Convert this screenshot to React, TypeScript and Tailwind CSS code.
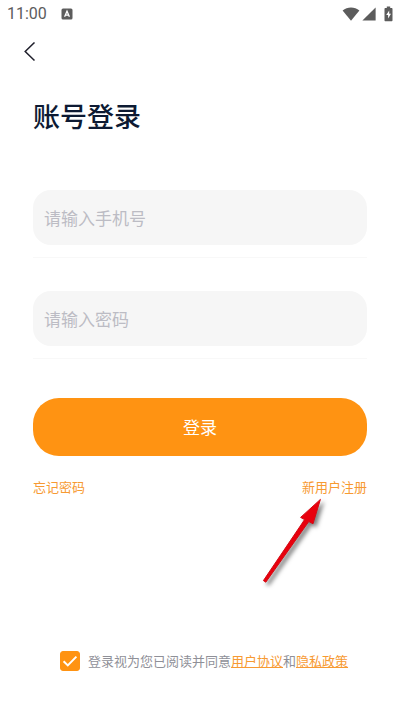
import React, { useState } from 'react';

interface FieldProps {
  type: string;
  label: string;
  value: string;
  onChange: (value: string) => void;
}

const Field: React.FC<FieldProps> = ({ type, label, value, onChange }) => (
  <div className="border-b border-[#f8f8f8] pb-3">
    <input
      type={type}
      value={value}
      aria-label={label}
      placeholder={label}
      onChange={(e) => onChange(e.target.value)}
      className="block h-[55px] w-full rounded-[18px] bg-[#f6f6f6] px-[11px] text-[17px] text-[#1b2338] outline-none placeholder:text-[#bcbcc4]"
    />
  </div>
);

const StatusBar = () => (
  <div className="flex h-7 items-center justify-between px-[7px] text-[#5c5c5c]">
    <div className="flex items-center gap-[14px]">
      <span className="font-['Roboto',sans-serif] text-base leading-5">11:00</span>
      <svg width="12" height="12" viewBox="0 0 12 12">
        <rect x="0.5" y="0.5" width="11" height="11" rx="1.5" fill="currentColor" />
        <path d="M3.6 8.8L6 3.2l2.4 5.6M4.4 7.1h3.2" fill="none" stroke="#fff" strokeWidth="1.3" />
      </svg>
    </div>
    <div className="flex items-center">
      <svg width="18" height="14" viewBox="0 0 18 14" fill="currentColor">
        <path d="M0.6 3.6C5.4-0.4 12.6-0.4 17.4 3.6L9 13.8z" />
      </svg>
      <svg className="ml-[2px]" width="14" height="14" viewBox="0 0 14 14" fill="currentColor">
        <path d="M13.6 0.4v13.2H0.4z" />
      </svg>
      <svg className="ml-2" width="9" height="16" viewBox="0 0 9 16">
        <path d="M2.8 0.5h3.4v1.4h1.3c.6 0 1 .4 1 1v11.3c0 .6-.4 1-1 1h-6c-.6 0-1-.4-1-1V2.9c0-.6.4-1 1-1h1.3z" fill="currentColor" />
        <path d="M5.2 4.4L2.2 9h1.9v3.6L7 7.8H5.2z" fill="#fff" />
      </svg>
    </div>
  </div>
);

// Red pointer that highlights the register link
const Pointer = () => (
  <svg
    className="pointer-events-none absolute right-9 top-5 overflow-visible"
    width="70"
    height="92"
    viewBox="0 0 70 92"
    style={{ filter: 'drop-shadow(3px 3px 2px rgba(0,0,0,0.5))' }}
  >
    <path d="M2.4 83.6L43.6 22.6l-4-2.2L59.4 2.4 52 26.8l-4.2-2.3L4.8 85.2z" fill="#e8000d" stroke="#d40a14" strokeWidth="1" strokeLinejoin="round" />
  </svg>
);

export default function App() {
  const [phone, setPhone] = useState('');
  const [password, setPassword] = useState('');
  const [agreed, setAgreed] = useState(true);

  return (
    <div className="flex min-h-screen flex-col bg-white font-['Noto_Sans_CJK_SC',sans-serif]">
      <StatusBar />

      <header className="flex h-12 items-center pl-5">
        <button type="button" aria-label="返回" className="flex h-6 w-5 items-center justify-center text-[#20202c]">
          <svg width="12" height="20" viewBox="0 0 12 20" fill="none" stroke="currentColor" strokeWidth="1.5">
            <path d="M10.5 0.5L1.2 9.5l9.3 9" />
          </svg>
        </button>
      </header>

      <main className="px-[33px] pt-5">
        <h1 className="text-[27px] font-medium leading-10 text-[#0d1a33]">账号登录</h1>

        <form className="mt-[54px]" onSubmit={(e) => e.preventDefault()}>
          <div className="flex flex-col gap-[33px]">
            <Field type="tel" label="请输入手机号" value={phone} onChange={setPhone} />
            <Field type="password" label="请输入密码" value={password} onChange={setPassword} />
          </div>
          <button type="submit" className="mt-[39px] block h-[58px] w-full rounded-[26px] bg-[#ff9312] text-[17px] text-white">
            登录
          </button>
        </form>

        <div className="relative mt-[21px] flex justify-between text-[13px] leading-5 text-[#f79a32]">
          <a href="#forgot">忘记密码</a>
          <a href="#register">新用户注册</a>
          <Pointer />
        </div>
      </main>

      <footer className="mt-auto flex items-center justify-center gap-2 pb-[41px] pl-2 text-[13px] leading-5 text-[#8f9098]">
        <span className="relative flex h-5 w-5">
          <input
            id="agree"
            type="checkbox"
            checked={agreed}
            onChange={(e) => setAgreed(e.target.checked)}
            className="peer h-5 w-5 appearance-none rounded-[3px] border border-[#ff9312] checked:bg-[#ff9312]"
          />
          <svg className="pointer-events-none absolute inset-0 hidden peer-checked:block" width="20" height="20" viewBox="0 0 20 20" fill="none" stroke="#fff" strokeWidth="2">
            <path d="M3.6 10.2l4.2 4.2 8.6-8.8" />
          </svg>
        </span>
        <p>
          <label htmlFor="agree">登录视为您已阅读并同意</label>
          <a href="#terms" className="text-[#f79a32] underline">用户协议</a>
          和
          <a href="#privacy" className="text-[#f79a32] underline">隐私政策</a>
        </p>
      </footer>
    </div>
  );
}
